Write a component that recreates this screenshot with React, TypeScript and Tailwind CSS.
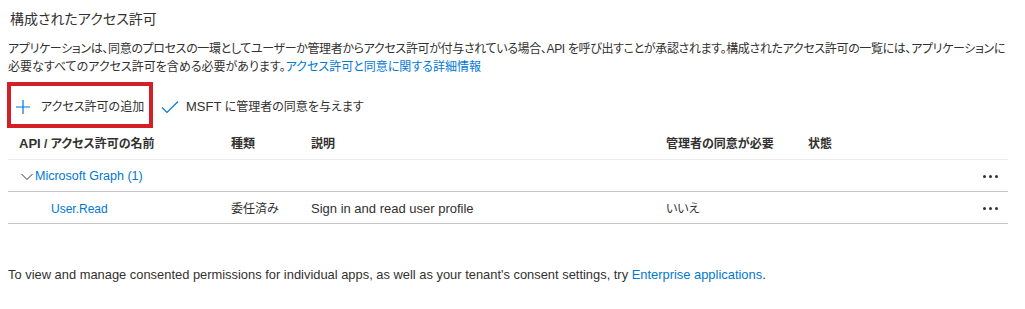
import React from "react";

const font = "[font-family:'Liberation_Sans','Noto_Sans_CJK_JP',sans-serif] [font-feature-settings:'palt']";

function Dots() {
  return (
    <div className="flex gap-[3px] items-center">
      <span className="w-[3px] h-[3px] bg-[#323130] rounded-full" />
      <span className="w-[3px] h-[3px] bg-[#323130] rounded-full" />
      <span className="w-[3px] h-[3px] bg-[#323130] rounded-full" />
    </div>
  );
}

const cols = "grid grid-cols-[212px_80px_355px_142px_1fr_40px] h-[32px] items-center pl-[11px] pr-[10px]";

export default function App() {
  return (
    <div className={`${font} w-[1025px] h-[309px] bg-white text-[#323130] pl-[8px] pt-[8px] overflow-hidden`}>
      <h2 className="text-[14px] leading-[22px] pl-[2px]">構成されたアクセス許可</h2>
      <p className="text-[12px] leading-[18px] mt-[10px] whitespace-nowrap">
        <span className="block tracking-[-0.35px]">
          アプリケーションは、同意のプロセスの一環としてユーザーか管理者からアクセス許可が付与されている場合、API を呼び出すことが承認されます。構成されたアクセス許可の一覧には、アプリケーションに
        </span>
        <span className="block">
          必要なすべてのアクセス許可を含める必要があります。
          <span className="text-[#0078d4]">アクセス許可と同意に関する詳細情報</span>
        </span>
      </p>
      <div className="flex items-center mt-[6px] ml-[-1px]">
        <div className="border-4 border-[#d32027] h-[46px] w-[146px] flex items-center pl-[4px] pt-[3px]">
          <svg width="16" height="16" viewBox="0 0 16 16" className="mr-[10px]">
            <path d="M8 1v14M1 8h14" stroke="#0078d4" strokeWidth="1.2" fill="none" />
          </svg>
          <span className="text-[12px] whitespace-nowrap">アクセス許可の追加</span>
        </div>
        <div className="flex items-center ml-[8px] pt-[3px]">
          <svg width="18" height="14" viewBox="0 0 18 14" className="mr-[7px]">
            <path d="M1 7.5l5 5L17 1.5" stroke="#0078d4" strokeWidth="1.2" fill="none" />
          </svg>
          <span className="text-[12px] whitespace-nowrap">
            <span className="text-[13px]">MSFT</span> に管理者の同意を与えます
          </span>
        </div>
      </div>
      <div className="w-[1000px] text-[12px]">
        <div className={`${cols} border-b border-[#edebe9] font-semibold`}>
          <span>
            <span className="text-[13px]">API</span> / アクセス許可の名前
          </span>
          <span>種類</span>
          <span>説明</span>
          <span>管理者の同意が必要</span>
          <span>状態</span>
          <span />
        </div>
        <div className="flex h-[32px] items-center border-b border-[#c8c6c4] pl-[13px] pr-[10px] pt-[2px]">
          <svg width="12" height="8" viewBox="0 0 12 8" className="mr-[2px]">
            <path d="M0.5 1l5.5 5.5L11.5 1" stroke="#323130" strokeWidth="1" fill="none" />
          </svg>
          <span className="text-[#0078d4] text-[12.5px]">Microsoft Graph (1)</span>
          <div className="flex-1" />
          <Dots />
        </div>
        <div className={`${cols} border-b border-[#c8c6c4] pt-[2px]`}>
          <span className="text-[#0078d4] text-[12px] pl-[32px]">User.Read</span>
          <span>委任済み</span>
          <span className="text-[13px]">Sign in and read user profile</span>
          <span>いいえ</span>
          <span />
          <div className="flex justify-end"><Dots /></div>
        </div>
      </div>
      <p className="text-[12.9px] mt-[41px] whitespace-nowrap">
        To view and manage consented permissions for individual apps, as well as your tenant's consent settings, try{" "}
        <span className="text-[#0078d4]">Enterprise applications</span>.
      </p>
    </div>
  );
}
